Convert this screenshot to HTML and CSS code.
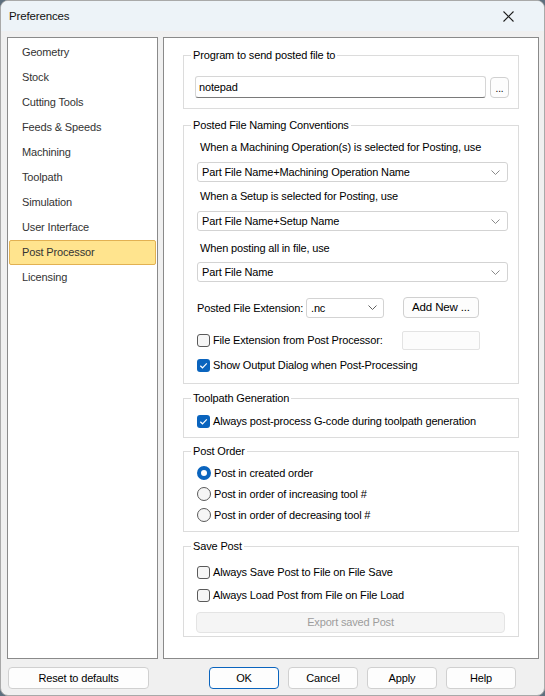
FILE: index.html
```html
<!DOCTYPE html>
<html>
<head>
<meta charset="utf-8">
<title>Preferences</title>
<link rel="stylesheet" href="styles.css">
</head>
<body>
<div class="window">
  <div class="titlebar">
    <span class="title">Preferences</span>
    <svg class="close" width="11" height="11" viewBox="0 0 11 11"><path d="M0.5 0.5 L10.5 10.5 M10.5 0.5 L0.5 10.5" stroke="#1f1f1f" stroke-width="1.1" fill="none"/></svg>
  </div>
  <div class="main">
    <div class="nav">
      <div class="nav-item">Geometry</div>
      <div class="nav-item">Stock</div>
      <div class="nav-item">Cutting Tools</div>
      <div class="nav-item">Feeds &amp; Speeds</div>
      <div class="nav-item">Machining</div>
      <div class="nav-item">Toolpath</div>
      <div class="nav-item">Simulation</div>
      <div class="nav-item">User Interface</div>
      <div class="nav-item selected">Post Processor</div>
      <div class="nav-item">Licensing</div>
    </div>
    <div class="panel">
      <fieldset class="group g1">
        <legend>Program to send posted file to</legend>
        <div class="gbody b1">
          <div class="textbox">notepad</div>
          <div class="btn dots">...</div>
        </div>
      </fieldset>
      <fieldset class="group g2">
        <legend>Posted File Naming Conventions</legend>
        <div class="gbody b2">
          <div class="lbl l1">When a Machining Operation(s) is selected for Posting, use</div>
          <div class="select s1"><span>Part File Name+Machining Operation Name</span><svg class="chev" width="9" height="5" viewBox="0 0 9 5"><path d="M0.5 0.5 L4.5 4.5 L8.5 0.5" stroke="#8a8a8a" fill="none"/></svg></div>
          <div class="lbl l2">When a Setup is selected for Posting, use</div>
          <div class="select s2"><span>Part File Name+Setup Name</span><svg class="chev" width="9" height="5" viewBox="0 0 9 5"><path d="M0.5 0.5 L4.5 4.5 L8.5 0.5" stroke="#8a8a8a" fill="none"/></svg></div>
          <div class="lbl l3">When posting all in file, use</div>
          <div class="select s3"><span>Part File Name</span><svg class="chev" width="9" height="5" viewBox="0 0 9 5"><path d="M0.5 0.5 L4.5 4.5 L8.5 0.5" stroke="#8a8a8a" fill="none"/></svg></div>
          <div class="extrow">
            <span class="extlbl">Posted File Extension:</span>
            <div class="select ext"><span>.nc</span><svg class="chev" width="9" height="5" viewBox="0 0 9 5"><path d="M0.5 0.5 L4.5 4.5 L8.5 0.5" stroke="#606060" fill="none"/></svg></div>
            <div class="btn addnew">Add New ...</div>
          </div>
          <div class="cbrow r1">
            <div class="cbwide"><span class="cb"></span><span>File Extension from Post Processor:</span></div>
            <div class="disbox"></div>
          </div>
          <div class="cbrow r2">
            <span class="cb checked"><svg width="13" height="13" viewBox="0 0 13 13"><path d="M3.3 6.7 L5.5 8.8 L9.8 4.4" stroke="#fff" stroke-width="1.2" fill="none"/></svg></span><span>Show Output Dialog when Post-Processing</span>
          </div>
        </div>
      </fieldset>
      <fieldset class="group g3">
        <legend>Toolpath Generation</legend>
        <div class="gbody b3">
          <div class="cbrow">
            <span class="cb checked"><svg width="13" height="13" viewBox="0 0 13 13"><path d="M3.3 6.7 L5.5 8.8 L9.8 4.4" stroke="#fff" stroke-width="1.2" fill="none"/></svg></span><span>Always post-process G-code during toolpath generation</span>
          </div>
        </div>
      </fieldset>
      <fieldset class="group g4">
        <legend>Post Order</legend>
        <div class="gbody b4">
          <div class="radrow"><span class="radio on"></span><span>Post in created order</span></div>
          <div class="radrow"><span class="radio"></span><span>Post in order of increasing tool #</span></div>
          <div class="radrow"><span class="radio"></span><span>Post in order of decreasing tool #</span></div>
        </div>
      </fieldset>
      <fieldset class="group g5">
        <legend>Save Post</legend>
        <div class="gbody b5">
          <div class="cbrow sp"><span class="cb"></span><span>Always Save Post to File on File Save</span></div>
          <div class="cbrow sp"><span class="cb"></span><span>Always Load Post from File on File Load</span></div>
          <div class="btn export">Export saved Post</div>
        </div>
      </fieldset>
    </div>
  </div>
  <div class="footer">
    <div class="btn reset">Reset to defaults</div>
    <div class="actions">
      <div class="btn act ok">OK</div>
      <div class="btn act">Cancel</div>
      <div class="btn act">Apply</div>
      <div class="btn act">Help</div>
    </div>
  </div>
</div>
</body>
</html>
```

FILE: styles.css
```css
* { box-sizing: border-box; }
body {
  margin: 0;
  background: #5d6f7e;
  font-family: "Liberation Sans", Arial, sans-serif;
  font-size: 11px;
  letter-spacing: -0.15px;
  color: #000;
}
.window {
  width: 545px;
  height: 696px;
  background: #f0f0f0;
  border: 1px solid #a9a9a9;
  border-radius: 8px;
  overflow: hidden;
  display: flex;
  flex-direction: column;
}
.titlebar {
  height: 30px;
  flex-shrink: 0;
  background: #edf3f8;
  display: flex;
  align-items: center;
  justify-content: space-between;
  padding-left: 8px;
}
.title { font-size: 11.5px; color: #111; }
.close { margin-right: 30px; }
.main {
  height: 628px;
  flex-shrink: 0;
  display: flex;
  gap: 5px;
  padding: 6px 5px 0 6px;
}
.nav {
  width: 151px;
  height: 622px;
  background: #fff;
  border: 1px solid #8a8a8a;
  padding: 2px 1px;
}
.nav-item {
  height: 25px;
  line-height: 23px;
  padding-left: 12px;
  border: 1px solid transparent;
  border-radius: 2px;
  color: #333;
}
.nav-item.selected {
  background: #ffe48e;
  border-color: #e2b152;
}
.panel {
  width: 376px;
  height: 622px;
  background: #fff;
  border: 1px solid #8a8a8a;
  padding: 11px 19px 0 19px;
}
.group {
  margin: 0;
  padding: 0;
  min-width: 0;
  border: 1px solid #dcdcdc;
}
.group legend {
  padding: 0 2px;
  margin-left: 7px;
  line-height: 13px;
}
.g2 { margin-top: 10px; }
.g3 { margin-top: 8px; }
.g4 { margin-top: 7px; }
.g5 { margin-top: 8px; }
.b1 {
  display: flex;
  gap: 4px;
  padding: 14px 9px 10px 11px;
}
.textbox {
  flex: 1;
  height: 22px;
  border: 1px solid #d6d6d6;
  border-bottom-color: #7a7a7a;
  border-radius: 3px;
  background: #fff;
  padding-left: 3px;
  line-height: 20px;
}
.btn {
  border: 1px solid #d0d0d0;
  border-radius: 4px;
  background: #fdfdfd;
  text-align: center;
}
.dots {
  width: 19px;
  height: 21px;
  margin-top: 1px;
  line-height: 21px;
  font-size: 10px;
}
.b2 { padding: 0 10px 8px 13px; }
.lbl { height: 14px; line-height: 14px; padding-left: 3px; }
.l1 { margin-top: 8px; }
.l2 { margin-top: 7px; }
.l3 { margin-top: 10px; }
.select {
  height: 20px;
  border: 1px solid #d3d3d3;
  border-radius: 3px;
  background: #fff;
  display: flex;
  align-items: center;
  justify-content: space-between;
  padding: 0 7px 0 4px;
}
.s1 { margin-top: 8px; }
.s2 { margin-top: 8px; }
.s3 { margin-top: 7px; }
.extrow {
  margin-top: 15px;
  height: 21px;
  display: flex;
  align-items: center;
}
.extlbl { width: 109px; }
.ext { width: 78px; padding-right: 6px; }
.addnew {
  width: 76px;
  height: 21px;
  margin-left: 19px;
  line-height: 19px;
  font-size: 11.5px;
}
.cbrow {
  height: 20px;
  display: flex;
  align-items: center;
}
.r1 { margin-top: 12px; }
.r2 { margin-top: 5px; }
.cbwide { width: 205px; display: flex; align-items: center; }
.cb {
  width: 13px;
  height: 13px;
  flex-shrink: 0;
  margin-right: 3px;
  border: 1px solid #5a5a5a;
  border-radius: 3px;
  background: #f6f6f6;
}
.cb.checked {
  border: none;
  background: #0a64be;
}
.cb svg { display: block; }
.disbox {
  width: 78px;
  height: 19px;
  border: 1px solid #e3e3e3;
  border-radius: 2px;
  background: #fcfcfc;
}
.b3 { padding: 6px 10px 6px 13px; }
.b4 { padding: 4px 10px 6px 13px; }
.radrow {
  height: 21px;
  display: flex;
  align-items: center;
}
.radio {
  width: 14px;
  height: 14px;
  flex-shrink: 0;
  margin-right: 3px;
  border: 1px solid #5a5a5a;
  border-radius: 50%;
  background: #f6f6f6;
}
.radio.on {
  border: 4.5px solid #0a64be;
  background: #fff;
}
.b5 { padding: 7px 12px 3px 13px; }
.sp { height: 22px; margin-top: 1px; }
.export {
  margin-top: 6px;
  margin-left: -1px;
  width: 309px;
  height: 21px;
  line-height: 19px;
  background: #f5f5f5;
  border-color: #e4e4e4;
  color: #9d9d9d;
}
.footer {
  flex: 1;
  display: flex;
  align-items: flex-start;
  justify-content: space-between;
  padding: 8px 28px 0 7px;
}
.reset {
  width: 141px;
  height: 22px;
  line-height: 20px;
}
.actions { display: flex; gap: 9px; }
.act {
  width: 70px;
  height: 22px;
  line-height: 20px;
}
.ok { border-color: #0a64be; }
```
